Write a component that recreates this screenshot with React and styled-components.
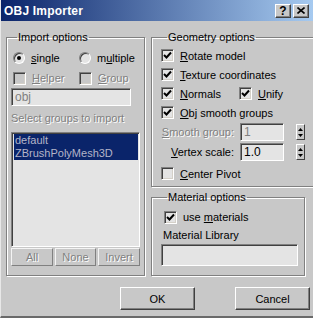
import styled, { createGlobalStyle } from 'styled-components';

const Global = createGlobalStyle`
    body {
        margin: 0;
        background: #c8c8c8;
    }
`;

const Window = styled.div`
    width: 313px;
    height: 318px;
    background: #c8c8c8;
    font-family: 'Liberation Sans', Arial, sans-serif;
    font-size: 11px;
    color: #000;
    display: flex;
    flex-direction: column;
    box-sizing: border-box;
    border-left: 1px solid #e8e8e8;
    border-bottom: 2px solid #6a6a6a;
    overflow: hidden;
`;

const TitleBar = styled.div`
    height: 21px;
    flex: none;
    background: linear-gradient(to right, #0a246a, #a6caf0);
    display: flex;
    align-items: center;
    padding: 0 4px 0 3px;
    gap: 2px;
`;

const Title = styled.div`
    flex: 1;
    color: #fff;
    font-weight: bold;
    font-size: 12px;
    letter-spacing: 0.2px;
`;

const TitleButton = styled.div`
    width: 16px;
    height: 14px;
    box-sizing: border-box;
    background: #c8c8c8;
    border: 1px solid;
    border-color: #fff #404040 #404040 #fff;
    box-shadow: inset -1px -1px #808080;
    display: flex;
    align-items: center;
    justify-content: center;
    font-weight: bold;
    font-size: 12px;
    line-height: 1;
`;

const Body = styled.div`
    flex: 1;
    display: flex;
    flex-direction: column;
    padding: 10px 3px 0 5px;
`;

const Columns = styled.div`
    display: flex;
    gap: 6px;
`;

const RightColumn = styled.div`
    display: flex;
    flex-direction: column;
    gap: 4px;
`;

const Group = styled.fieldset`
    margin: 0;
    box-sizing: border-box;
    width: ${p => p.$w}px;
    height: ${p => p.$h}px;
    border: 1px solid #808080;
    box-shadow: inset 1px 1px #fff, 1px 1px #fff;
    padding: ${p => p.$pad};
    display: flex;
    flex-direction: column;
`;

const Legend = styled.legend`
    padding: 0 1px;
    margin-left: 6px;
    line-height: 13px;
`;

const Row = styled.div`
    display: flex;
    align-items: center;
    height: ${p => p.$h || 19}px;
    gap: ${p => p.$gap || 0}px;
    padding-left: ${p => p.$indent || 0}px;
    flex: none;
`;

const Option = styled.label`
    display: flex;
    align-items: center;
    gap: 6px;
    white-space: nowrap;
    width: ${p => (p.$w ? p.$w + 'px' : 'auto')};
    color: ${p => (p.$off ? '#808080' : '#000')};
    text-shadow: ${p => (p.$off ? '1px 1px #fff' : 'none')};
`;

const Box = styled.span`
    width: 13px;
    height: 13px;
    box-sizing: border-box;
    flex: none;
    background: ${p => (p.$off ? '#c8c8c8' : '#e4e4e4')};
    border: 1px solid;
    border-color: #808080 #fff #fff #808080;
    box-shadow: inset 1px 1px #404040, inset -1px -1px #d4d0c8;
    display: flex;
    align-items: center;
    justify-content: center;
`;

const Radio = styled.span`
    width: 12px;
    height: 12px;
    box-sizing: border-box;
    flex: none;
    border-radius: 50%;
    background: #e4e4e4;
    border: 1px solid;
    border-color: #808080 #fff #fff #808080;
    box-shadow: inset 1px 1px #404040;
    display: flex;
    align-items: center;
    justify-content: center;
    &::after {
        content: '';
        width: 4px;
        height: 4px;
        border-radius: 50%;
        background: ${p => (p.$on ? '#000' : 'transparent')};
    }
`;

const Field = styled.div`
    width: ${p => p.$w}px;
    height: ${p => p.$h || 18}px;
    box-sizing: border-box;
    background: #e4e4e4;
    border: 1px solid;
    border-color: #808080 #fff #fff #808080;
    box-shadow: inset 1px 1px #404040;
    padding: 1px 3px;
    color: ${p => (p.$off ? '#808080' : '#000')};
    font-size: ${p => p.$fs || 11}px;
    line-height: ${p => (p.$h || 18) - 4}px;
    flex: none;
`;

const Caption = styled.div`
    color: ${p => (p.$off ? '#808080' : '#000')};
    text-shadow: ${p => (p.$off ? '1px 1px #fff' : 'none')};
    height: ${p => p.$h || 14}px;
    line-height: ${p => p.$h || 14}px;
    padding-left: ${p => p.$indent || 0}px;
    width: ${p => (p.$w ? p.$w + 'px' : 'auto')};
    text-align: ${p => p.$align || 'left'};
    white-space: nowrap;
    flex: none;
`;

const List = styled.div`
    width: 129px;
    height: 115px;
    box-sizing: border-box;
    background: #e4e4e4;
    border: 1px solid;
    border-color: #808080 #fff #fff #808080;
    box-shadow: inset 1px 1px #404040;
    padding: 1px 1px 0 2px;
    margin-top: 2px;
    flex: none;
`;

const ListItem = styled.div`
    background: #0a246a;
    color: #b4b4c8;
    height: 13px;
    line-height: 13px;
    padding-left: 1px;
    font-size: 11px;
`;

const ButtonRow = styled.div`
    display: flex;
    gap: 2px;
    margin-top: 1px;
`;

const Button = styled.div`
    width: ${p => p.$w}px;
    height: ${p => p.$h || 18}px;
    box-sizing: border-box;
    background: #c8c8c8;
    border: 1px solid;
    border-color: ${p => (p.$off ? '#f4f4f4 #808080 #808080 #f4f4f4' : '#fff #404040 #404040 #fff')};
    box-shadow: ${p => (p.$off ? 'none' : 'inset -1px -1px #808080')};
    display: flex;
    align-items: center;
    justify-content: center;
    font-size: 11px;
    color: ${p => (p.$off ? '#808080' : '#000')};
    text-shadow: ${p => (p.$off ? '1px 1px #fff' : 'none')};
`;

const Spinner = styled.div`
    width: 9px;
    height: 16px;
    margin-left: 6px;
    box-sizing: border-box;
    border: 1px solid;
    border-color: #fff #404040 #404040 #fff;
    display: flex;
    flex-direction: column;
    align-items: center;
    justify-content: space-around;
    padding: 1px 0;
`;

const Footer = styled.div`
    display: flex;
    justify-content: flex-end;
    gap: 40px;
    padding: 11px 0 0;
`;

function Check({ on = true, off = false }) {
    return (
        <Box $off={off}>
            {on && (
                <svg width="9" height="9" viewBox="0 0 9 9">
                    <path d="M1 4 L3.5 6.5 L8 1.5" stroke="#000" strokeWidth="2" fill="none" />
                </svg>
            )}
        </Box>
    );
}

function Spin() {
    return (
        <Spinner>
            <svg width="5" height="3" viewBox="0 0 5 3"><path d="M2.5 0 L5 3 L0 3 Z" fill="#000" /></svg>
            <svg width="5" height="3" viewBox="0 0 5 3"><path d="M0 0 L5 0 L2.5 3 Z" fill="#000" /></svg>
        </Spinner>
    );
}

export default function App() {
    return (
        <Window>
            <Global />
            <TitleBar>
                <Title>OBJ Importer</Title>
                <TitleButton>?</TitleButton>
                <TitleButton>
                    <svg width="8" height="7" viewBox="0 0 8 7">
                        <path d="M0.5 0.5 L7.5 6.5 M7.5 0.5 L0.5 6.5" stroke="#000" strokeWidth="1.6" />
                    </svg>
                </TitleButton>
            </TitleBar>
            <Body>
                <Columns>
                    <Group $w={143} $h={245} $pad="3px 4px 0 4px">
                        <Legend>Import options</Legend>
                        <Row $h={21} $indent={2}>
                            <Option $w={66}><Radio $on /><span><u>s</u>ingle</span></Option>
                            <Option><Radio /><span>m<u>u</u>ltiple</span></Option>
                        </Row>
                        <Row $h={20} $indent={2}>
                            <Option $w={66} $off><Check on={false} off /><span><u>H</u>elper</span></Option>
                            <Option $off><Check on={false} off /><span><u>G</u>roup</span></Option>
                        </Row>
                        <Field $w={120} $off $fs={12}>obj</Field>
                        <Caption $off $h={24}>Select groups to import</Caption>
                        <List>
                            <ListItem>default</ListItem>
                            <ListItem>ZBrushPolyMesh3D</ListItem>
                        </List>
                        <ButtonRow>
                            <Button $w={42} $off>All</Button>
                            <Button $w={41} $off>None</Button>
                            <Button $w={42} $off>Invert</Button>
                        </ButtonRow>
                    </Group>
                    <RightColumn>
                        <Group $w={153} $h={156} $pad="2px 8px 0 9px">
                            <Legend>Geometry options</Legend>
                            <Row><Option><Check /><span><u>R</u>otate model</span></Option></Row>
                            <Row><Option><Check /><span><u>T</u>exture coordinates</span></Option></Row>
                            <Row>
                                <Option $w={78}><Check /><span><u>N</u>ormals</span></Option>
                                <Option><Check /><span><u>U</u>nify</span></Option>
                            </Row>
                            <Row><Option><Check /><span><u>O</u>bj smooth groups</span></Option></Row>
                            <Row $h={20} $gap={6}>
                                <Caption $off $w={73} $align="right"><u>S</u>mooth group:</Caption>
                                <Field $w={44} $off $fs={12}>1</Field>
                                <Spin />
                            </Row>
                            <Row $h={20} $gap={6}>
                                <Caption $w={73} $align="right"><u>V</u>ertex scale:</Caption>
                                <Field $w={44} $fs={12}>1.0</Field>
                                <Spin />
                            </Row>
                            <Row $h={23}><Option><Check on={false} /><span><u>C</u>enter Pivot</span></Option></Row>
                        </Group>
                        <Group $w={153} $h={85} $pad="3px 6px 0 9px">
                            <Legend>Material options</Legend>
                            <Row $h={20} $indent={3}><Option><Check /><span>use <u>m</u>aterials</span></Option></Row>
                            <Caption $h={17} $indent={2}>Material Library</Caption>
                            <Field $w={137} $h={22} />
                        </Group>
                    </RightColumn>
                </Columns>
                <Footer>
                    <Button $w={75} $h={23}>OK</Button>
                    <Button $w={75} $h={23}>Cancel</Button>
                </Footer>
            </Body>
        </Window>
    );
}
